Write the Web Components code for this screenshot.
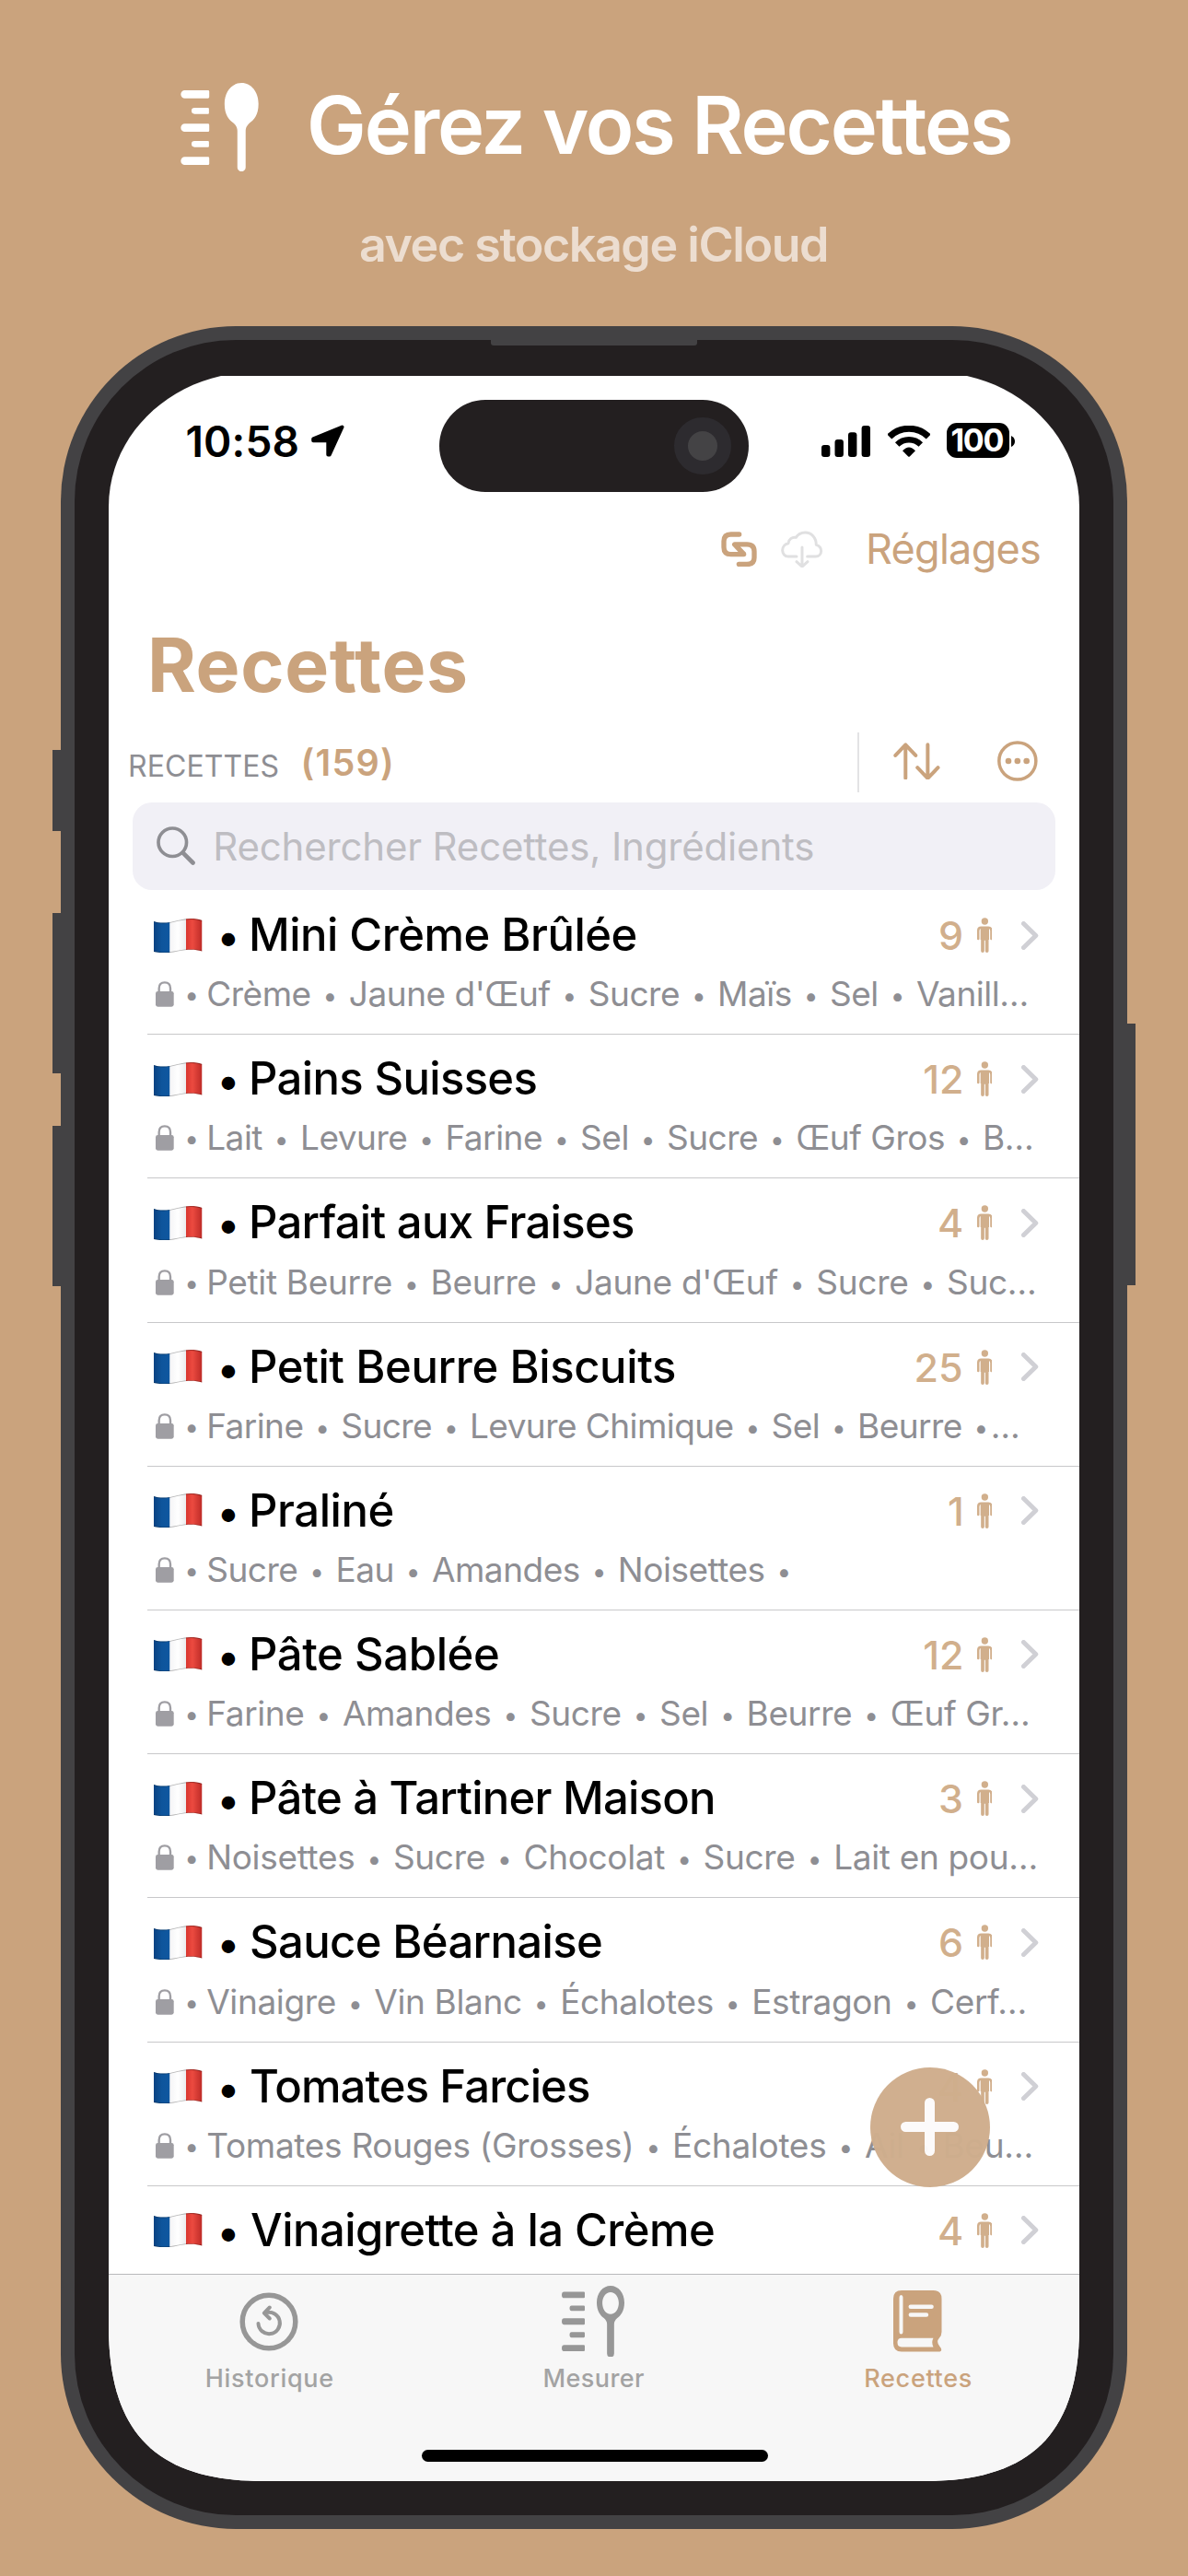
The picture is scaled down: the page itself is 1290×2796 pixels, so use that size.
<!DOCTYPE html>
<html lang="fr">
<head>
<meta charset="utf-8">
<title>Recettes</title>
<style>
html,body{margin:0;padding:0;background:#caa37d}
body{width:1290px;height:2796px;overflow:hidden;font-family:Inter,"Liberation Sans",sans-serif}
</style>
</head>
<body>
<promo-page></promo-page>
<script>
const ICONS={
logo:['108 90 256 288','<path d="M122 114H198Q202 114 202 118V136Q202 140 198 140H122A13 13 0 0 1 122 114ZM154 171H198Q201 171 201 174V188Q201 191 198 191H154A10 10 0 0 1 154 171ZM122 223H198Q202 223 202 227V245Q202 249 198 249H122A13 13 0 0 1 122 223ZM154 279H198Q201 279 201 282V296Q201 299 198 299H154A10 10 0 0 1 154 279ZM122 331H198Q202 331 202 335V353Q202 357 198 357H122A13 13 0 0 1 122 331ZM307.500 90C340 90 363 120 363 158C363 195 348 210 333 221Q321 232 321 246V365A13.500 13.500 0 0 1 294 365V246Q294 232 282 221C267 210 252 195 252 158C252 120 275 90 307.500 90Z"/>'],
logoOpen:['108 90 256 288','<path fill-rule="evenodd" d="M118 114H198Q202 114 202 118V136Q202 140 198 140H118Q108 140 108 127T118 114ZM148 170H198Q202 170 202 174V188Q202 192 198 192H148Q140 192 140 181T148 170ZM118 222H198Q202 222 202 226V244Q202 248 198 248H118Q108 248 108 235T118 222ZM148 278H198Q202 278 202 282V296Q202 300 198 300H148Q140 300 140 289T148 278ZM118 330H198Q202 330 202 334V352Q202 356 198 356H118Q108 356 108 343T118 330ZM307.500 90C340 90 364 120 364 158C364 193 348 211 335 221Q322 232 322 246V365A14.500 14.500 0 0 1 293 365V246Q293 232 280 221C267 211 251 193 251 158C251 120 275 90 307.500 90ZM307.500 116C288 116 274 136 274 160C274 184 288 205 307.500 205C327 205 341 184 341 160C341 136 327 116 307.500 116Z"/>'],
nav:['0 0 36 35','<path d="M33.500 2.500L2.200 15.400V17.300H18.300V32.500H19.800Z" stroke="currentColor" stroke-width="4" stroke-linejoin="round"/>'],
signal:['0 0 53 34','<rect y="21" width="9.400" height="13" rx="3"/><rect x="14.500" y="15" width="9.400" height="19" rx="3"/><rect x="29" y="7.300" width="9.400" height="26.700" rx="3"/><rect x="43.600" width="9.400" height="34" rx="3"/>'],
wifi:['0 0 46 34','<g fill="none" stroke="currentColor"><path stroke-width="7" d="M1.800 12A30 30 0 0 1 44.200 12"/><path stroke-width="6.400" d="M10.200 20.500A18.300 18.300 0 0 1 35.800 20.500"/></g><path d="M16 27.300Q23 19.500 30 27.300L23.800 33.500Q23 34.200 22.200 33.500Z"/>'],
nub:['0 0 4 12','<path d="M0 0Q4 2 4 6T0 12Z"/>'],
link:['188 77 117 116','<path fill="none" stroke="currentColor" stroke-width="16" stroke-linecap="round" stroke-linejoin="round" d="M247 86H220Q197 86 197 109V128Q197 151 220 151H262L232 119H272Q296 119 296 142V162Q296 184 272 184H246"/><path d="M225 118L240 118L269 146L262 153Z"/>'],
cloud:['384 76 136 122','<path fill="none" stroke="currentColor" stroke-width="9" stroke-linecap="round" stroke-linejoin="round" d="M435 160H408C396 160 389 150 389 140C389 127 398 119 408 117C409 104 420 96 433 98C440 87 450 82 463 82C483 82 499 98 499 122C509 125 515 132 515 142C515 152 508 160 497 160H470M453 130V192M435 177L453 193L471 177"/>'],
sort:['748 766 152 122','<path fill="none" stroke="currentColor" stroke-width="12" stroke-linecap="round" stroke-linejoin="round" d="M788 774V882M755 808L788 773L821 808M860.500 773V882M827 848L860.500 883L894 848"/>'],
more:['1088 759 131 132','<circle cx="1153.500" cy="825" r="60" fill="none" stroke="currentColor" stroke-width="10.500"/><circle cx="1124" cy="825" r="10"/><circle cx="1153.500" cy="825" r="10"/><circle cx="1183" cy="825" r="10"/>'],
search:['149 713 128 128','<g fill="none" stroke="currentColor" stroke-linecap="round"><circle cx="201" cy="765" r="46" stroke-width="11"/><path stroke-width="14" d="M236 800L268 832"/></g>'],
flag:['0 0 52.500 37','<defs><linearGradient id="b"><stop offset="0" stop-color="#0a4282"/><stop offset=".5" stop-color="#0e559c"/><stop offset="1" stop-color="#0f57a0"/></linearGradient><linearGradient id="w"><stop offset="0" stop-color="#f4f4f6"/><stop offset=".5" stop-color="#fff"/><stop offset="1" stop-color="#ececee"/></linearGradient><linearGradient id="r"><stop offset="0" stop-color="#d9362f"/><stop offset=".4" stop-color="#ec4a40"/><stop offset="1" stop-color="#bd2b27"/></linearGradient><clipPath id="c"><path d="M0 3C7 5.500 16 5 26 2C36-.5 44-.8 52.500 2V35.500C44 33 36 33.500 26 35.500C16 38 7 37.500 0 36Z"/></clipPath></defs><g clip-path="url(#c)"><path fill="url(#b)" d="M0 0H17.500V40H0Z"/><path fill="url(#w)" d="M17.500 0H35V40H17.500Z"/><path fill="url(#r)" d="M35 0H52.500V40H35Z"/><path fill="none" stroke="#000" stroke-opacity=".28" stroke-width="1.600" d="M0 3C7 5.500 16 5 26 2C36-.5 44-.8 52.500 2M52.500 35.500C44 33 36 33.500 26 35.500C16 38 7 37.500 0 36"/></g>'],
lock:['88 285 59 84','<rect x="88" y="318" width="59" height="50" rx="7"/><path fill="none" stroke="currentColor" stroke-width="7" d="M99 320V308Q99 289 117.500 289T136 308V320"/>'],
person:['600 78 50 114','<circle cx="625" cy="90" r="11"/><path fill="none" stroke="currentColor" stroke-width="7.500" stroke-linecap="round" d="M603.700 147V121Q603.700 110.500 613 110.500H637Q646.300 110.500 646.300 121V147"/><path d="M611 108H639V150H637.500V187Q637.500 192 632 192T626.500 187V152H623.500V187Q623.500 192 618 192T612.500 187V150H611Z"/>'],
chevron:['747 87 55 93','<path fill="none" stroke="currentColor" stroke-width="15" stroke-linecap="round" stroke-linejoin="round" d="M754.500 94.500L794.500 133.500L754.500 172.500"/>'],
plus:['0 0 63 63','<path fill="none" stroke="currentColor" stroke-width="11" stroke-linecap="round" d="M31.500 5.500V57.500M5.500 31.500H57.500"/>'],
history:['-32 -32 64 64','<g fill="none" stroke="currentColor" stroke-linecap="round" stroke-linejoin="round"><circle r="28.800" stroke-width="5.500"/><path stroke-width="4" d="M-11.500 2A11.700 11.700 0 1 0 -3-9.800M.8-15.500L-5.200-9.400L.8-3.500"/></g>'],
book:['0 0 52.500 66.500','<path fill-rule="evenodd" d="M9 0H43.500Q52.500 0 52.500 9V45Q52.500 49 50 51.500Q46 56 50.500 61Q54 65 50.500 66.500H9Q0 66.500 0 57.500V9Q0 0 9 0ZM8.500 5Q6.500 5 6.500 7.500V45Q6.500 47.500 8.500 47.500T10.500 45V7.500Q10.500 5 8.500 5ZM18.800 15.400A2.300 2.300 0 0 0 18.800 20H41.500A2.300 2.300 0 0 0 41.500 15.400ZM18.800 24.300A2.200 2.200 0 0 0 18.800 28.700H36A2.200 2.200 0 0 0 36 24.300ZM9 51.700Q4.500 51.700 4.500 56.500T9 61.500H43.500Q41 56.500 43.500 51.700Z"/>']
};

const define=(name,html,after)=>customElements.define(name,class extends HTMLElement{
  connectedCallback(){
    if(this.shadowRoot)return;
    const root=this.attachShadow({mode:'open'});
    const t=document.createElement('template');
    t.innerHTML=typeof html==='function'?html(this):html;
    root.append(t.content.cloneNode(true));
    if(after)after(this,root);
  }
});

/* Text whose box is trimmed to its ink; w spreads it over a given width.
   Content with inline markup is measured as laid out instead. */
const pen=document.createElement('canvas').getContext('2d');
define('fit-text','<style>:host{display:block;flex:none;white-space:pre}span{display:inline-block;white-space:pre}</style><span><slot></slot></span>',(el,root)=>{
  const cs=getComputedStyle(el),text=el.textContent,span=root.querySelector('span');
  let left,ink;
  if(el.firstElementChild){
    left=-3;ink=span.getBoundingClientRect().width-5;
  }else{
    pen.font=`${cs.fontWeight} ${cs.fontSize} ${cs.fontFamily}`;
    const m=pen.measureText(text);
    left=m.actualBoundingBoxLeft;ink=left+m.actualBoundingBoxRight;
  }
  const w=parseFloat(el.getAttribute('w'))||ink,n=[...text].length-1;
  span.style.marginLeft=left+'px';
  if(n>0)span.style.letterSpacing=(w-ink)/n+'px';
  el.style.width=w+'px';
});

define('ui-icon',el=>{
  const [box,body]=ICONS[el.getAttribute('name')];
  return `<style>:host{display:block;flex:none;width:${el.getAttribute('w')}px;height:${el.getAttribute('h')}px}svg{display:block;width:100%;height:100%}</style><svg viewBox="${box}" preserveAspectRatio="none" fill="currentColor">${body}</svg>`;
});

define('promo-header',`<style>
:host{display:flex;flex-direction:column;box-sizing:border-box;height:354px;padding-top:76px;color:#fff}
.top{display:flex;align-items:center;gap:56px;height:120px;padding-left:196px;font-size:86.500px;font-weight:600;line-height:120px}
ui-icon{margin-top:4px}
.sub{margin-top:40px;padding-left:391px;font-size:52px;font-weight:600;line-height:60px;color:#ecddd0}
</style><div class="top"><ui-icon name="logo" w="85" h="96"></ui-icon><fit-text w="760">Gérez vos Recettes</fit-text></div>
<div class="sub"><fit-text w="506">avec stockage iCloud</fit-text></div>`);

define('status-bar',`<style>
:host{display:flex;align-items:center;height:141px;padding:0 70.500px 0 85.500px;color:#000}
.time{font-size:46px;font-weight:600;line-height:60px;margin-right:14px}
.gap{flex:1}
.bat{display:flex;align-items:center;justify-content:center;width:68px;height:38px;border-radius:11px;background:#000;color:#fff;font-size:34px;font-weight:700;line-height:38px;margin:0 2px 1px 18px}
</style><fit-text class="time" w="120">10:58</fit-text><ui-icon name="nav" w="36" h="35"></ui-icon><div class="gap"></div>
<ui-icon name="signal" w="53" h="34" style="margin-right:19px"></ui-icon><ui-icon name="wifi" w="46" h="34"></ui-icon>
<div class="bat"><fit-text w="56">100</fit-text></div><ui-icon name="nub" w="4" h="12"></ui-icon>`);

define('nav-bar',`<style>
:host{display:flex;align-items:center;justify-content:flex-end;height:94px;padding-right:43px;color:#caa37d}
.t{font-size:45px;line-height:94px;margin-left:49.500px}
</style><ui-icon name="link" w="39" h="38.500"></ui-icon><ui-icon name="cloud" w="45.300" h="40.700" style="margin-left:26.500px;color:#e0e0e1"></ui-icon><fit-text class="t" w="186">Réglages</fit-text>`);

define('big-title',`<style>:host{display:block;padding:8px 0 0 47px;font-size:80.500px;font-weight:700;line-height:142px;color:#caa37d}</style><fit-text w="341">Recettes</fit-text>`);

define('section-bar',`<style>
:host{display:flex;align-items:center;height:69px;padding:0 45.500px 0 23px;color:#caa37d}
.a{font-size:32px;line-height:62px;padding-top:8px;color:#8e8e93;margin-right:28px}
.b{font-size:39.500px;font-weight:600;line-height:67px;padding-top:2px}
.gap{flex:1}
.rule{width:2px;height:65px;background:#e3e3e5;margin-right:37px}
ui-icon{margin-bottom:3px}
</style><fit-text class="a" w="160.500">RECETTES</fit-text><fit-text class="b" w="95.500">(159)</fit-text><div class="gap"></div><div class="rule"></div><ui-icon name="sort" w="50.500" h="40.500" style="margin-right:62px"></ui-icon><ui-icon name="more" w="43.700" h="44"></ui-icon>`);

define('search-field',`<style>
:host{display:flex;align-items:center;height:95px;margin:9px 26px 0;border-radius:21px;background:#f1f0f6;font-size:42px;line-height:95px;color:#bebdc2}
ui-icon{margin:0 22px 0 25.700px;color:#8e8e93}
</style><ui-icon name="search" w="42.500" h="42.500"></ui-icon><fit-text w="649">Rechercher Recettes, Ingrédients</fit-text>`);

define('recipe-row',el=>{const a=n=>el.getAttribute(n);
const sub=a('sub')?`<div class="l s"><ui-icon name="lock" w="19.700" h="28"></ui-icon><fit-text w="8" style="font-size:28px;margin:0 16px 0 14.500px;padding-top:2px">•</fit-text><fit-text w="${a('sw')}">${a('sub').replace(/•/g,'<b>•</b>')}</fit-text></div><hr>`:'';
return `<style>
:host{display:flex;flex-direction:column;flex:none;box-sizing:border-box;height:156.200px;padding-top:16px}
.l{display:flex;align-items:center;height:64px;line-height:64px;padding-left:49px}
.name{font-size:49px;font-weight:500;color:#000}
.n{font-size:43px;font-weight:500}
.r{display:flex;align-items:center;margin-left:auto;padding-right:44.500px;gap:16.500px;color:#d1af8c}
.s{height:64.500px;font-size:37px;color:#8e8e93;padding-left:51px}
.s ui-icon{color:#9f9ea3}
b{font-size:28px;font-weight:400;line-height:1;margin:0 3px;vertical-align:1px}
hr{border:0;margin:auto 0 0 42px;height:1px;background:#c8c8ca}
</style><div class="l"><ui-icon name="flag" w="52.500" h="37"></ui-icon><fit-text w="14" style="font-size:46px;margin:0 19px 0 20.500px;padding-top:2px">•</fit-text><fit-text class="name" w="${a('w')}">${a('name')}</fit-text>
<div class="r"><fit-text class="n">${a('n')}</fit-text><ui-icon name="person" w="16.700" h="38"></ui-icon><ui-icon name="chevron" w="18.300" h="31" style="margin-left:15.500px;color:#d0d0d5"></ui-icon></div></div>${sub}`});

const rows=[
['Mini Crème Brûlée',417.5,9,"Crème • Jaune d'Œuf • Sucre • Maïs • Sel • Vanill…",888],
['Pains Suisses',309.5,12,'Lait • Levure • Farine • Sel • Sucre • Œuf Gros • B…',893.5],
['Parfait aux Fraises',415,4,"Petit Beurre • Beurre • Jaune d'Œuf • Sucre • Suc…",896.5],
['Petit Beurre Biscuits',460,25,'Farine • Sucre • Levure Chimique • Sel • Beurre •…',878.5],
['Praliné',153.5,1,'Sucre • Eau • Amandes • Noisettes •',633],
['Pâte Sablée',268,12,'Farine • Amandes • Sucre • Sel • Beurre • Œuf Gr…',889.5],
['Pâte à Tartiner Maison',501,3,'Noisettes • Sucre • Chocolat • Sucre • Lait en pou…',898],
['Sauce Béarnaise',380,6,'Vinaigre • Vin Blanc • Échalotes • Estragon • Cerf…',886],
['Tomates Farcies',367,4,'Tomates Rouges (Grosses) • Échalotes • Ail • Beu…',893],
['Vinaigrette à la Crème',502,4,'',1]];
define('recipe-list',()=>`<style>:host{display:flex;flex-direction:column;box-sizing:border-box;height:1502px;padding-top:1px;overflow:hidden}</style>`+rows.map(r=>`<recipe-row name="${r[0]}" w="${r[1]}" n="${r[2]}" sub="${r[3]}" sw="${r[4]}"></recipe-row>`).join(''));

define('tab-item',el=>`<style>
:host{display:flex;flex-direction:column;align-items:center;width:160px;height:120px}
.i{display:flex;align-items:center;height:77px}
fit-text{font-size:27px;font-weight:500;line-height:32px;margin:8px 0 0 2px}
</style><div class="i"><slot></slot></div><fit-text w="${el.getAttribute('w')}">${el.getAttribute('label')}</fit-text>`);

define('tab-bar',`<style>
:host{display:flex;flex-direction:column;align-items:center;box-sizing:border-box;height:225px;border-top:1.500px solid #b9b9bb;background:#f7f7f7;color:#a3a3a3}
.tabs{display:flex;justify-content:space-between;align-self:stretch;padding:12px 95.500px 0 94px}
ui-icon{color:#979797}.on,.on ui-icon{color:#caa37d}
.home{width:376px;height:13px;border-radius:7px;background:#000;margin:58px 0 0 1px}
</style><div class="tabs"><tab-item label="Historique" w="136.500"><ui-icon name="history" w="64" h="64"></ui-icon></tab-item><tab-item label="Mesurer" w="107.500"><ui-icon name="logoOpen" w="68" h="77"></ui-icon></tab-item><tab-item class="on" label="Recettes" w="114.500"><ui-icon name="book" w="52.500" h="66.500"></ui-icon></tab-item></div><div class="home"></div>`);

define('add-button',`<style>:host{position:absolute;left:826.500px;top:1835.500px;width:130px;height:130px;border-radius:50%;background:#cfae8d;opacity:.975;display:flex;align-items:center;justify-content:center;color:#fcfafa}</style><ui-icon name="plus" w="63" h="63"></ui-icon>`);

define('phone-frame',`<style>
:host{display:block;position:relative;box-sizing:border-box;margin-left:66px;width:1158px;height:2391px;padding:15px;border-radius:190px;background:#434244}
.bezel{position:relative;box-sizing:border-box;height:100%;padding:39px 37px 37px;border-radius:175px;background:#231f20}
.speaker{position:absolute;left:452px;top:0;width:224px;height:6px;border-radius:0 0 3px 3px;background:#434244}
.screen{position:relative;height:2285px;background:#fff;clip-path:path("M0 142C0 74 51 16 122 0L932 0C1003 16 1054 74 1054 142L1054 2117C1054 2233 1002 2285 886 2285L168 2285C52 2285 0 2233 0 2117Z")}
.island{position:absolute;left:359px;top:26px;width:336px;height:100px;border-radius:50px;background:#231f20}
.cam{position:absolute;left:255px;top:19px;box-sizing:border-box;width:62px;height:62px;border:15.500px solid #2d2b2f;border-radius:50%;background:#444345}
.key{position:absolute;width:10px;background:#434244}
</style><div class="key" style="left:-9px;top:460px;height:88px"></div><div class="key" style="left:-9px;top:637px;height:174px"></div><div class="key" style="left:-9px;top:868px;height:174px"></div><div class="key" style="right:-9px;top:757px;height:284px"></div>
<div class="bezel"><div class="speaker"></div><div class="screen"><slot></slot><div class="island"><div class="cam"></div></div></div></div>`);

define('promo-page',`<style>:host{display:flex;flex-direction:column;width:1290px;height:2796px;background:#caa37d}</style>
<promo-header></promo-header><phone-frame><status-bar></status-bar><nav-bar></nav-bar><big-title></big-title><section-bar></section-bar><search-field></search-field><recipe-list></recipe-list><tab-bar></tab-bar><add-button></add-button></phone-frame>`);
</script>
</body>
</html>
